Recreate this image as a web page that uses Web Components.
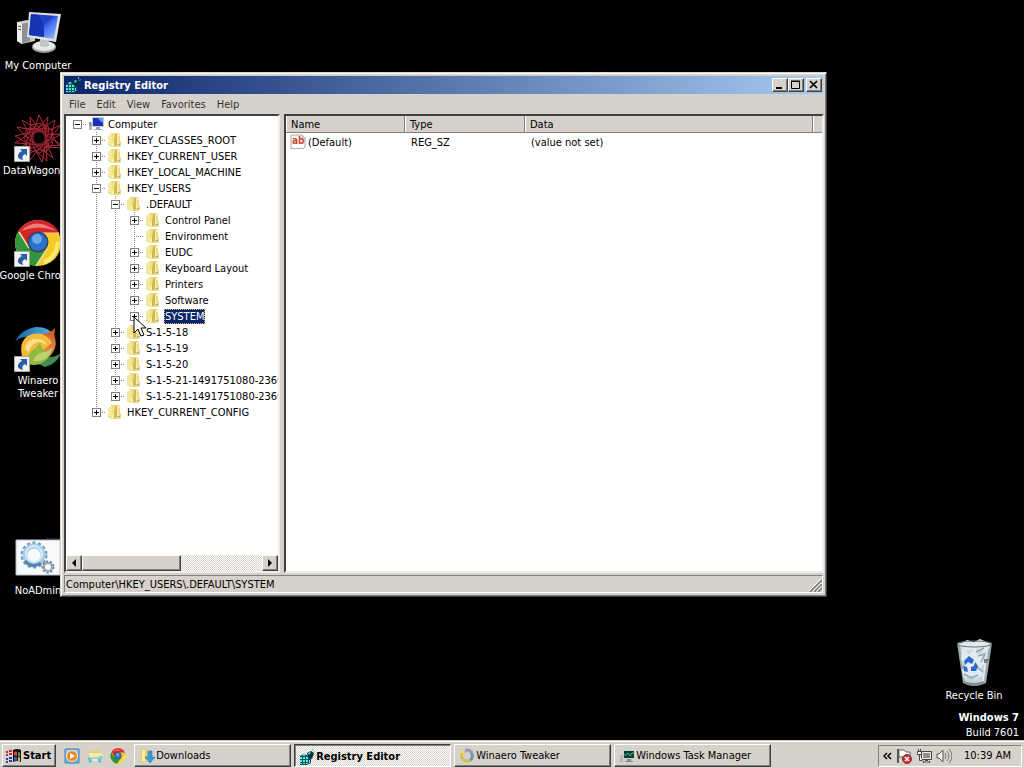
<!DOCTYPE html>
<html lang="en">
<head>
<meta charset="utf-8">
<title>Registry Editor</title>
<style>
    :root {
        --face: #d6d2cb;
        --light: #ffffff;
        --shadow: #808080;
        --dark: #404040;
        --navy: #0a246a;
    }
    html, body { height: 100%; }
    body {
        margin: 0;
        overflow: hidden;
        background: #000;
        color: #000;
        font: 11px/13px "DejaVu Sans Condensed", "DejaVu Sans", sans-serif;
    }
</style>
</head>
<body>
<win-desktop>
    <desktop-icon slot="icons" icon="computer">My Computer</desktop-icon>
    <desktop-icon slot="icons" icon="datawagon" shortcut align="start">DataWagon</desktop-icon>
    <desktop-icon slot="icons" icon="chrome" shortcut>Google Chrome</desktop-icon>
    <desktop-icon slot="icons" icon="winaero" shortcut>Winaero<br>Tweaker</desktop-icon>
    <desktop-icon slot="icons"></desktop-icon>
    <desktop-icon slot="icons" icon="gears">NoADmin</desktop-icon>
    <desktop-icon slot="bin" icon="bin">Recycle Bin</desktop-icon>
    <build-mark slot="mark" build="Build 7601">Windows 7</build-mark>

    <app-window slot="windows" caption="Registry Editor" icon="regedit">
        <menu-bar slot="menu" items="File,Edit,View,Favorites,Help"></menu-bar>
        <key-tree slot="left">
            <reg-key label="Computer" icon="pc" state="open" root last>
                <reg-key label="HKEY_CLASSES_ROOT" state="closed"></reg-key>
                <reg-key label="HKEY_CURRENT_USER" state="closed"></reg-key>
                <reg-key label="HKEY_LOCAL_MACHINE" state="closed"></reg-key>
                <reg-key label="HKEY_USERS" state="open">
                    <reg-key label=".DEFAULT" state="open">
                        <reg-key label="Control Panel" state="closed"></reg-key>
                        <reg-key label="Environment"></reg-key>
                        <reg-key label="EUDC" state="closed"></reg-key>
                        <reg-key label="Keyboard Layout" state="closed"></reg-key>
                        <reg-key label="Printers" state="closed"></reg-key>
                        <reg-key label="Software" state="closed"></reg-key>
                        <reg-key label="SYSTEM" state="closed" selected last></reg-key>
                    </reg-key>
                    <reg-key label="S-1-5-18" state="closed"></reg-key>
                    <reg-key label="S-1-5-19" state="closed"></reg-key>
                    <reg-key label="S-1-5-20" state="closed"></reg-key>
                    <reg-key label="S-1-5-21-1491751080-2360" state="closed"></reg-key>
                    <reg-key label="S-1-5-21-1491751080-2360" state="closed" last></reg-key>
                </reg-key>
                <reg-key label="HKEY_CURRENT_CONFIG" state="closed" last></reg-key>
            </reg-key>
        </key-tree>
        <value-list slot="right"></value-list>
        <span slot="status">Computer\HKEY_USERS\.DEFAULT\SYSTEM</span>
    </app-window>

    <mouse-pointer slot="pointer"></mouse-pointer>

    <task-bar slot="taskbar">
        <task-button icon="downloads">Downloads</task-button>
        <task-button icon="regedit" active>Registry Editor</task-button>
        <task-button icon="tweaker">Winaero Tweaker</task-button>
        <task-button icon="taskmgr">Windows Task Manager</task-button>
        <system-tray slot="tray" time="10:39 AM"></system-tray>
    </task-bar>
</win-desktop>

<script>
const ICONS = {
    computer: ['0 0 48 48', `
        <defs><linearGradient id="s" x1="0" x2="1" y2="1"><stop offset="0" stop-color="#2647d8"/><stop offset=".45" stop-color="#2140c8"/><stop offset=".55" stop-color="#3f6cf0"/><stop offset="1" stop-color="#9fc4ff"/></linearGradient></defs>
        <path d="M3 13l10-2 8 2v19L8 35l-5-3z" fill="#c9ccca"/><path d="M3 13l5 2v20l-5-3z" fill="#eee"/><path d="M8 15l8-2v19l-8 3z" fill="#8d918f"/>
        <path d="M4 17l3 1M4 20l3 1" stroke="#555"/>
        <ellipse cx="30" cy="38" rx="12" ry="6" fill="#9aa09e"/><ellipse cx="30" cy="37" rx="11" ry="5" fill="#e6e9e7"/>
        <path d="M26 29h8l1 8q-5 2-9 0z" fill="#bfc5c3"/>
        <path d="M15 3l32 2-5 28-29-5z" fill="#dfe3e0"/><path d="M17 5l27 2-4 23-25-4z" fill="url(#s)"/>
        <path d="M17 5l8 1q6 9 5 22l-15-2z" fill="#1832b4"/>`],
    datawagon: ['0 0 48 48', `
        <g fill="none" stroke="#c92e3b" stroke-width=".9">
        <path d="M25 1l8 16 14-6-10 12 11 11-17-1-3 15-8-15-15 6 9-14L3 13l17 3z"/>
        <path d="M34 3l-3 18 17-1-16 8 7 16-13-10-11 13 2-17-16-1 14-9-7-14 15 9z"/>
        <path d="M16 3l10 13L41 6l-4 17 10 8-15 1 1 15-12-11-12 9 4-16L1 22l16-4z"/></g>
        <g fill="none" stroke="#a02632" stroke-width="1"><ellipse cx="25" cy="24" rx="15" ry="7"/><ellipse cx="25" cy="24" rx="15" ry="7" transform="rotate(30 25 24)"/><ellipse cx="25" cy="24" rx="15" ry="7" transform="rotate(60 25 24)"/><ellipse cx="25" cy="24" rx="15" ry="7" transform="rotate(90 25 24)"/><ellipse cx="25" cy="24" rx="15" ry="7" transform="rotate(120 25 24)"/><ellipse cx="25" cy="24" rx="15" ry="7" transform="rotate(150 25 24)"/><circle cx="25" cy="24" r="6" stroke="#701c25"/></g>`],
    chrome: ['0 0 48 48', `
        <circle cx="24" cy="24" r="23" fill="#f4cb27"/>
        <path d="M4 13A23 23 0 0 1 45 14H24L14 29z" fill="#d3242b"/>
        <path d="M4 13A23 23 0 0 0 22 47L33 30 15 29z" fill="#31943c"/>
        <path d="M7 12Q22-3 42 12Q25 5 7 12" fill="#ef7d77"/><path d="M24 14h21" stroke="#f1d1b5"/><path d="M5 13l10 16M33 30L22 47" stroke="#e7e29f" stroke-width="1.500"/>
        <path d="M30 43q12-4 14-20" stroke="#fbe975" stroke-width="4" fill="none"/>
        <circle cx="24" cy="23" r="10.500" fill="#38435a"/><circle cx="24" cy="23" r="9" fill="#2b70ca"/><circle cx="23" cy="20" r="5" fill="#68a9ec"/>`],
    winaero: ['0 0 48 48', `
        <defs>
            <linearGradient id="b" x1="0" x2="1"><stop offset="0" stop-color="#14659f"/><stop offset="1" stop-color="#58b5e6"/></linearGradient>
            <linearGradient id="o" x1="0" x2="0" y2="1"><stop offset="0" stop-color="#cf5423"/><stop offset="1" stop-color="#f0a05a"/></linearGradient>
        </defs>
        <path d="M1 18Q6 6 21 3q13-1 20 9l-14 4-15-3Q5 13 1 18" fill="url(#b)"/>
        <path d="M47 29q-4 11-16 14l-9-4 14-6q6 0 11-4" fill="#3f8a55"/>
        <path d="M27 10q9 0 14-6 0 4-1 7 4 9-1 17-5 8-13 11l-2-16z" fill="url(#o)"/>
        <path d="M8 32Q4 15 18 10q14-3 20 9l-12 9-12 12q-6-3-6-8" fill="#f3bb3a"/>
        <path d="M14 40q-2-10 5-14 4-2 7-8 1 6 5 9 6 3 7-4 0 8-7 14-8 6-17 3" fill="#93b943"/>
        <path d="M11 23q3-9 13-8 8 1 9 7-6-6-12-3-5 3-6 9-4-2-4-5" fill="#fae08a"/>
        <path d="M19 37q3-8 11-9 5 0 8-5-1 9-9 13-5 2-10 1" fill="#bdd26d"/>`],
    gears: ['0 0 48 48', `
        <path d="M2 6h44v35H2z" fill="#f7f9fb" stroke="#b9bec3"/><path d="M32 5h14" stroke="#555" stroke-dasharray="3 1"/>
        <g fill="none"><circle cx="20" cy="21" r="11" stroke="#6f9fbe" stroke-width="5" stroke-dasharray="3 2"/><circle cx="20" cy="21" r="9" stroke="#a9cfe5" stroke-width="5"/><circle cx="20" cy="20" r="8" stroke="#d5ebf6" stroke-width="2"/><path d="M11 27q7 8 16 2" stroke="#5481ae" stroke-width="3"/>
        <circle cx="34" cy="33" r="5" stroke="#6c849b" stroke-width="3" stroke-dasharray="2 1.500"/><circle cx="34" cy="33" r="4" stroke="#8fa5ba" stroke-width="2"/></g>`],
    bin: ['0 0 48 48', `
        <path d="M7 4h35l-6 40q-11 6-23 0z" fill="#9da9ad"/><path d="M10 7h29l-5 36q-9 4-19 0z" fill="#c3d5df"/>
        <path d="M9 5l8-4 7 2 6-3 9 4 1 4-5 4-10-2-9 2z" fill="#e3e9eb"/>
        <path d="M12 9l7 6 6-6 4 7 7-6-4 9 4 4-5 5 2 8-7 4-6-4-6 4-2-9 4-5-5-5z" fill="#e0eaf0"/>
        <path d="M26 13l8-4M28 17l7-2-4 8M14 35l7 4 7-3M27 28l6 5" stroke="#92a7b2" stroke-width="1.500" fill="none"/>
        <path d="M14 22l5-5 5 4-2 4-4-2-3 3zM25 23l3 4-2 5h-5v-4l3-1zM13 27l4 1 1 5-4-1z" fill="#2d67ce"/>
        <ellipse cx="24.500" cy="5" rx="17.500" ry="3" fill="none" stroke="#687376"/><path d="M14 42q10 4 20 0l-1 3q-9 4-18 0z" fill="#868b84"/><path d="M37 9l-4 33" stroke="#eef5f7"/><path d="M34 21h4M34 23h3" stroke="#222"/>`],
    arrow: ['0 0 16 16', `<path fill="#f1f1ed" stroke="#a9aaa6" d="M.5.5h15v15H.5z"/><path d="M6 3h7v7l-2-2q-4 2-2 6-6-1-5-5 1-3 4-4z" fill="#2a5eaa"/>`],
    regedit: ['0 0 16 16', `
        <path d="M1 7l4-2 5 2 2-1v8l-4 2H1z" fill="#04575f"/><path d="M1 8h2v2H1zM4 8h2v2H4zM7 8h2v2H7zM1 11h2v2H1zM4 11h2v2H4zM7 11h2v2H7zM1 14h2v1H1zM4 14h2v1H4zM7 14h2v1H7zM10 11h1v3h-1zM3 6l2-1 2 1-2 1z" fill="#62e4df"/>
        <path d="M8 4l4-2 3 2-2 6-4-2z" fill="#062e3a"/><path d="M9 4l2-1 1 1-2 2zM13 0h1v2h-1zM14 3l2-1-1 2z" fill="#51d7dc"/>`],
    pc: ['0 0 16 16', `
        <path d="M1 6h3v8H1z" fill="#aeb8b9"/><path d="M1 7h2M1 9h2" stroke="#647378"/><path d="M4 1h12v10H4z" fill="#c4cbd7"/><path d="M5 2h10v8H5z" fill="#1a2fba"/><path d="M10 2h5v5q-3-1-5-5" fill="#6a92ee"/><path d="M8 11h4v2h2v1H6v-1h2z" fill="#9eaab3"/>`],
    folder: ['0 0 16 16', `
        <path d="M4 1h8l1 2v6l1 1v4l-2 1H5l-4-2V4l3-1z" fill="#e9d777"/>
        <path d="M1 4l4-2v12l-4-2z" fill="#f4e99a"/>
        <path d="M5 2h3v7l-3 2z" fill="#f0e08a"/>
        <path d="M8 2h2v11l-3 1V9z" fill="#d3b952"/>
        <path d="M10 2h2l1 1v7l-3 3z" fill="#f7edac"/>
        <path d="M12 4v6" stroke="#e2ca66"/>
        <path d="M5 11l2-1v4l-2 1z" fill="#f9f2bf"/>
        <path d="M11 12h2v1h-2z" fill="#8fae8c"/>`],
    string: ['0 0 16 16', `
        <path d="M1 1h11l3 3v9l-2 2-2-1-2 1-2-1-2 1-2-1-2 1z" fill="#fff" stroke="#a8a5a2"/><path d="M12 1v3h3" fill="none" stroke="#bbb"/>
        <text x="2" y="10" font-family="DejaVu Sans Condensed, DejaVu Sans, sans-serif" font-size="10" font-weight="bold" fill="#c8452c">ab</text>`],
    downloads: ['0 0 16 16', `<path d="M2 1l6-1v13l-4 2-2-1z" fill="#ebcd68"/><path d="M3 2l3-1v13l-3-1z" fill="#f9eca9"/><path d="M9 3h4v6h3l-5 6-5-6h3z" fill="#3c9bcf" stroke="#277cab" stroke-width=".6"/>`],
    tweaker: ['0 0 16 16', `<g fill="none" stroke-width="3"><path d="M3 10a5 5 0 0 1 3-7" stroke="#e6bd3e"/><path d="M5 3a5 5 0 0 1 8 4" stroke="#8b9ac0"/><path d="M13 6a5 5 0 0 1-4 7" stroke="#5e9bb5"/><path d="M11 12a5 5 0 0 1-8-3" stroke="#cfc247"/></g><path d="M2 5l2-3 3-1-3 5z" fill="#f3df83"/>`],
    taskmgr: ['0 0 16 16', `<path d="M1 7h3v7H1z" fill="#b4b8b3"/><path d="M4 2h12v9H4z" fill="#cbd2c9"/><path d="M5 3h10v7H5z" fill="#063f35"/><path d="M5 7h2l2-2 2 3 2-3h2" fill="none" stroke="#53b98e"/><path d="M8 11h4v2h2v1H6v-1h2z" fill="#808c86"/>`],
    flag: ['0 0 16 16', `
        <path d="M7 2q4-2 8 0v12q-4-2-8 0z" fill="#111"/><path d="M8 4q2-1 3 0v4q-1-1-3 0z" fill="#e34131"/><path d="M12 4q1 0 2 1v4q-1-1-2-1z" fill="#4ca348"/><path d="M8 9q2-1 3 0v4q-1-1-3 0z" fill="#3457c4"/><path d="M12 9q1 0 2 1v4q-1-1-2-1z" fill="#edc541"/>
        <path d="M0 4h2M3 3h3M0 7h2M3 6h3" stroke="#bd3433" stroke-width="2"/><path d="M0 11h2M3 10h3M0 14h2M3 13h3" stroke="#3044a3" stroke-width="2"/>`],
    media: ['0 0 16 16', `<path d="M1 1h14v14H1z" fill="#6faddd" stroke="#4784b9"/><path d="M2 2h12v5H2z" fill="#a4cfec"/><circle cx="8" cy="8" r="5.500" fill="#e88720" stroke="#fff3d5"/><path d="M6 5l5 3-5 3z" fill="#fff"/>`],
    explorer: ['0 0 16 16', `<path d="M1 3h6l1-1h6v10H1z" fill="#e7cf77"/><path d="M2 5h13v8H2z" fill="#f6eba9"/><path d="M1 9q7 1 14-1l-1 7-3-1v-3H5v3l-3 1z" fill="#67bfd5"/><path d="M3 10h10" stroke="#c0ebef"/>`],
    action: ['0 0 16 16', `<path d="M2 1v14" stroke="#555" stroke-width="2"/><path d="M3 2h5l2 2h4v6H8L7 9H3z" fill="#fff" stroke="#656565"/><circle cx="11" cy="11" r="4.500" fill="#c73331" stroke="#8f2525"/><path d="M9 9l4 4M13 9l-4 4" stroke="#fff" stroke-width="1.500"/>`],
    network: ['0 0 16 16', `<path d="M5.500 3.500h10v8h-10z" fill="#8f8f8f" stroke="#414141"/><path d="M6.500 4.500h8v6h-8z" fill="none" stroke="#eee"/><path d="M9 12h3v1h2v2H7v-2h2z" fill="#444"/><path d="M8 14h5" stroke="#eee"/><path d="M1.500 3.500h4v3h-4zM2.500 1v2M4.500 1v2M3.500 7v5.500h3" fill="#fff" stroke="#454545"/>`],
    sound: ['0 0 16 16', `<path d="M1 6h2l4-4v12l-4-4H1z" fill="#eee" stroke="#555"/><path d="M9 5q2 3 0 6M11 3q4 5 0 10M13 1q6 7 0 14" fill="none" stroke="#777"/>`]
};

function defineElement(name, css, html, setup) {
    const template = document.createElement("template");
    template.innerHTML = `<style>*{box-sizing:border-box}button{font:inherit;color:inherit;margin:0;padding:0}${css}</style>${html}`;

    customElements.define(name, class extends HTMLElement {
        connectedCallback() {
            if (this.shadowRoot) return;
            this.attachShadow({ mode: "open" });
            this.shadowRoot.appendChild(template.content.cloneNode(true));
            if (setup) setup(this, this.shadowRoot);
        }
    });
}

// raised edge shared by the buttons
const RAISED = `background:var(--face);border:1px solid;border-color:var(--light) var(--dark) var(--dark) var(--light);box-shadow:inset -1px -1px var(--shadow);`;

defineElement("ui-icon", `
    :host { display: block; flex: none; width: 16px; height: 16px; }
    :host([large]) { width: 48px; height: 48px; }
    svg { display: block; width: 100%; height: 100%; }
`, ``, (host, root) => {
    const icon = ICONS[host.getAttribute("name")];
    if (icon) root.innerHTML += `<svg viewBox="${icon[0]}" aria-hidden="true">${icon[1]}</svg>`;
});

defineElement("win-desktop", `
    :host { display: grid; grid-template-rows: 1fr auto; height: 100vh; }
    .space { position: relative; display: flex; justify-content: space-between; padding-top: 9px; min-height: 0; }
    .corner { display: flex; flex-direction: column; justify-content: flex-end; align-items: flex-end; }
    .bin { padding-right: 12px; }
    .mark { padding-right: 5px; }
    .windows { position: absolute; left: 60px; top: 72px; }
    .pointer { position: absolute; left: 133px; top: 316px; pointer-events: none; }
`, `
    <main class="space">
        <div><slot name="icons"></slot></div>
        <div class="corner">
            <div class="bin"><slot name="bin"></slot></div>
            <div class="mark"><slot name="mark"></slot></div>
        </div>
        <div class="windows"><slot name="windows"></slot></div>
        <div class="pointer"><slot name="pointer"></slot></div>
    </main>
    <slot name="taskbar"></slot>
`);

defineElement("desktop-icon", `
    :host { display: flex; flex-direction: column; align-items: center; gap: 2px; width: 76px; height: 105px; color: #fff; text-align: center; white-space: nowrap; }
    :host([slot="bin"]) { height: 71px; }
    :host([align="start"]) .label { align-self: flex-start; padding-left: 3px; }
    .picture { position: relative; }
    .shortcut { position: absolute; left: 0; bottom: 0; }
`, `
    <div class="picture"></div>
    <div class="label"><slot></slot></div>
`, (host, root) => {
    if (!host.hasAttribute("icon")) return;
    root.querySelector(".picture").innerHTML = `<ui-icon large name="${host.getAttribute("icon")}"></ui-icon>`
        + (host.hasAttribute("shortcut") ? `<ui-icon class="shortcut" name="arrow"></ui-icon>` : "");
});

defineElement("build-mark", `
    :host { display: block; color: #fff; text-align: right; line-height: 15px; }
    b, span { display: block; }
`, `<b><slot></slot></b><span></span>`, (host, root) => {
    root.querySelector("span").textContent = host.getAttribute("build");
});

defineElement("app-window", `
    :host { display: flex; flex-direction: column; box-sizing: border-box; width: 767px; height: 525px; padding: 2px; background: var(--face); border: 1px solid; border-color: var(--face) var(--dark) var(--dark) var(--face); box-shadow: inset 1px 1px var(--light), inset -1px -1px var(--shadow); }
    header { display: flex; align-items: center; gap: 3px; height: 18px; margin: 1px 1px 0; padding: 0 1px; color: #fff; font-weight: bold; background: linear-gradient(90deg, #0a246a, #a6caf0); }
    h1 { flex: 1; margin: 0; font: inherit; }
    .controls { display: flex; }
    .controls button { ${RAISED} width: 16px; height: 14px; display: grid; place-items: center; }
    .controls button:last-child { margin-left: 2px; }
    .controls svg { width: 10px; height: 10px; fill: none; stroke: #000; }
    .panes { flex: 1; display: grid; grid-template-columns: 216px 1fr; gap: 4px; min-height: 0; padding: 0 0 0 1px; }
    .pane { display: flex; flex-direction: column; min-width: 0; min-height: 0; border: 2px solid; border-color: var(--dark) #eeeeec #eeeeec var(--dark); background: #fff; overflow: hidden; }
    footer { display: flex; justify-content: space-between; align-items: center; height: 18px; margin: 2px 1px 1px; padding-left: 1px; border: 1px solid; border-color: var(--shadow) var(--light) var(--light) var(--shadow); }
    footer svg { width: 13px; height: 13px; align-self: flex-end; }
`, `
    <header>
        <ui-icon></ui-icon><h1></h1>
        <div class="controls">
            <button aria-label="Minimize"><svg viewBox="0 0 10 10"><path d="M1 8h6" stroke-width="2"/></svg></button>
            <button aria-label="Maximize"><svg viewBox="0 0 10 10"><path d="M.5 1.500h8v7h-8zM0 1h9" /></svg></button>
            <button aria-label="Close"><svg viewBox="0 0 10 10"><path d="M1 1l7 7M8 1L1 8" stroke-width="1.700"/></svg></button>
        </div>
    </header>
    <slot name="menu"></slot>
    <div class="panes">
        <div class="pane"><slot name="left"></slot></div>
        <div class="pane"><slot name="right"></slot></div>
    </div>
    <footer><slot name="status"></slot><svg viewBox="0 0 13 13" fill="none"><path d="M1 13L13 1M5 13l8-8M9 13l4-4" stroke="#777" stroke-width="1.500"/><path d="M0 12L12 0M4 12l8-8M8 12l4-4" stroke="#fff"/></svg></footer>
`, (host, root) => {
    root.querySelector("h1").textContent = host.getAttribute("caption");
    root.querySelector("ui-icon").outerHTML = `<ui-icon name="${host.getAttribute("icon")}"></ui-icon>`;
});

defineElement("menu-bar", `
    :host { display: flex; height: 20px; }
    button { border: 0; background: none; padding: 0 5px 0 6px; color: #333; }
`, ``, (host, root) => {
    host.getAttribute("items").split(",").forEach((item) => {
        const button = document.createElement("button");
        button.textContent = item;
        root.appendChild(button);
    });
});

defineElement("key-tree", `
    :host { flex: 1; display: flex; flex-direction: column; min-height: 0; }
    .tree { flex: 1; padding-left: 2px; overflow: hidden; }
    .scroll { display: flex; height: 16px; background: repeating-conic-gradient(#fff 0 25%, var(--face) 0 50%) 0 0 / 2px 2px; }
    .scroll button { ${RAISED} width: 16px; display: grid; place-items: center; }
    .scroll .thumb { width: 99px; }
    .track { flex: 1; }
    svg { width: 6px; height: 8px; }
`, `
    <div class="tree" role="tree"><slot></slot></div>
    <div class="scroll">
        <button aria-label="Scroll left"><svg viewBox="0 0 6 8"><path d="M5 0v8L1 4z"/></svg></button>
        <button class="thumb" aria-label="Scroll position"></button>
        <span class="track"></span>
        <button aria-label="Scroll right"><svg viewBox="0 0 6 8"><path d="M1 0v8l4-4z"/></svg></button>
    </div>
`);

// A key is a gutter (lines and toggle) beside its row and its child keys,
// so each level of nesting is indented by one gutter.
defineElement("reg-key", `
    :host { display: grid; grid-template-columns: 19px 1fr; white-space: nowrap; }
    .gutter { display: grid; grid-template: 16px 1fr / 9px 10px; }
    .vertical { grid-area: 1 / 2 / 3 / 3; width: 1px; background: linear-gradient(#888 50%, transparent 0) 0 0 / 1px 2px; }
    .across { grid-area: 1 / 2 / 2 / 3; align-self: center; height: 1px; background: linear-gradient(90deg, #888 50%, transparent 0) 0 0 / 2px 1px; }
    :host([last]) .vertical { height: 8px; }
    :host([root]) .vertical { display: none; }
    .toggle { grid-area: 1 / 1 / 2 / 3; place-self: center; width: 9px; height: 9px; border: 1px solid var(--shadow); background: #fff; }
    .toggle svg { display: block; width: 7px; height: 7px; stroke: #000; }
    :host([state="open"]) .plus { display: none; }
    :host(:not([state])) .toggle { display: none; }
    :host([state="closed"]) .children { display: none; }
    .row { display: flex; align-items: center; gap: 3px; height: 16px; padding-left: 1px; }
    .label { height: 15px; padding: 0 1px; border: 1px solid transparent; border-width: 1px 0; }
    :host([selected]) .label { color: #fff; background: var(--navy); outline: 1px dotted #d8bd68; outline-offset: -1px; }
`, `
    <div class="gutter">
        <span class="vertical"></span><span class="across"></span>
        <button class="toggle" aria-label="Expand or collapse"><svg viewBox="0 0 7 7"><path d="M1 3.500h5"/><path class="plus" d="M3.500 1v5"/></svg></button>
    </div>
    <div role="treeitem">
        <div class="row"><ui-icon></ui-icon><span class="label"></span></div>
        <div class="children" role="group"><slot></slot></div>
    </div>
`, (host, root) => {
    root.querySelector(".label").textContent = host.getAttribute("label");
    root.querySelector("ui-icon").outerHTML = `<ui-icon name="${host.getAttribute("icon") || "folder"}"></ui-icon>`;
    root.querySelector(".toggle").addEventListener("click", () => {
        host.setAttribute("state", host.getAttribute("state") === "open" ? "closed" : "open");
    });
});

defineElement("value-list", `
    :host { display: block; }
    table { width: 100%; border-collapse: separate; border-spacing: 0; table-layout: fixed; }
    th { height: 17px; padding: 1px 0 0 5px; font-weight: normal; text-align: left; background: var(--face); border-right: 1px solid var(--shadow); border-bottom: 1px solid var(--shadow); box-shadow: inset 1px 0 #fff; }
    th:last-child { border-right: 0; }
    .name { width: 119px; }
    .type { width: 120px; }
    .rest { width: 9px; }
    td { height: 18px; padding: 0 0 0 5px; }
    td + td { padding-left: 6px; }
    .value { display: flex; align-items: center; gap: 2px; margin-left: -1px; }
`, `
    <table>
        <thead><tr><th class="name">Name</th><th class="type">Type</th><th>Data</th><th class="rest"></th></tr></thead>
        <tbody><tr><td><span class="value"><ui-icon name="string"></ui-icon>(Default)</span></td><td>REG_SZ</td><td>(value not set)</td></tr></tbody>
    </table>
`);

defineElement("mouse-pointer", `
    :host { display: block; width: 14px; height: 22px; }
    svg { display: block; }
`, `<svg width="14" height="22" viewBox="0 0 14 22" aria-hidden="true"><path d="M1 1v16l4-4 3 7 3-1-3-7h5z" fill="#fff" stroke="#000"/></svg>`);

defineElement("task-bar", `
    :host { display: flex; align-items: center; height: 28px; box-sizing: border-box; padding: 2px 2px 0; background: var(--face); border-top: 1px solid var(--face); box-shadow: inset 0 1px var(--light); }
    .start { ${RAISED} display: flex; align-items: center; gap: 1px; height: 23px; padding: 0 4px 0 3px; font-weight: bold; }
    .quick { display: flex; gap: 7px; padding: 0 8px; }
    .quick button { border: 0; background: none; }
    .tasks { flex: 1; display: flex; gap: 3px; min-width: 0; }
`, `
    <button class="start"><ui-icon name="flag"></ui-icon>Start</button>
    <div class="quick">
        <button aria-label="Media Player"><ui-icon name="media"></ui-icon></button>
        <button aria-label="Explorer"><ui-icon name="explorer"></ui-icon></button>
        <button aria-label="Chrome"><ui-icon name="chrome"></ui-icon></button>
    </div>
    <div class="tasks"><slot></slot></div>
    <slot name="tray"></slot>
`);

defineElement("task-button", `
    :host { display: block; flex: 0 1 157px; }
    button { ${RAISED} display: flex; align-items: center; gap: 1px; width: 100%; height: 23px; padding: 0 4px; white-space: nowrap; }
    :host([active]) button { padding-top: 2px; font-weight: bold; border-color: var(--dark) var(--light) var(--light) var(--dark); box-shadow: inset 1px 1px var(--shadow); background: repeating-conic-gradient(#fff 0 25%, var(--face) 0 50%) 0 0 / 2px 2px; }
`, `<button><ui-icon></ui-icon><slot></slot></button>`, (host, root) => {
    root.querySelector("ui-icon").outerHTML = `<ui-icon name="${host.getAttribute("icon")}"></ui-icon>`;
});

defineElement("system-tray", `
    :host { display: flex; align-items: center; gap: 4px; height: 22px; box-sizing: border-box; padding: 0 10px 0 4px; border: 1px solid; border-color: var(--shadow) var(--light) var(--light) var(--shadow); }
    button { border: 0; background: none; }
    .more svg { display: block; width: 9px; height: 8px; fill: none; stroke: #000; stroke-width: 1.500; }
    time { padding-left: 8px; }
`, `
    <button class="more" aria-label="Show hidden icons"><svg viewBox="0 0 9 8"><path d="M4 1L1 4l3 3M8 1L5 4l3 3"/></svg></button>
    <ui-icon name="action"></ui-icon>
    <ui-icon name="network"></ui-icon>
    <ui-icon name="sound"></ui-icon>
    <time></time>
`, (host, root) => {
    root.querySelector("time").textContent = host.getAttribute("time");
});
</script>
</body>
</html>
